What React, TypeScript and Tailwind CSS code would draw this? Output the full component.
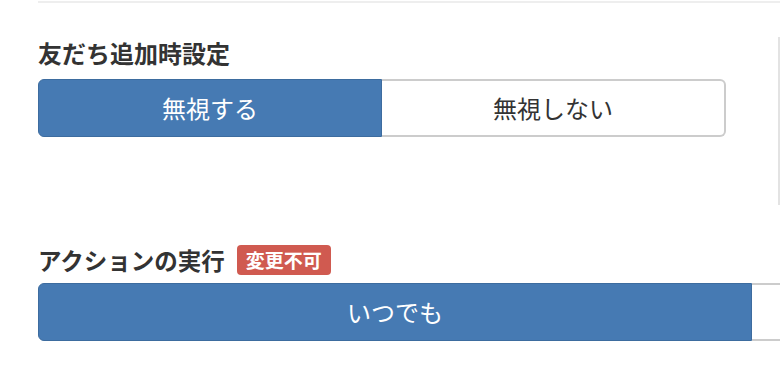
import React from 'react';

const FONT = { fontFamily: '"Noto Sans CJK JP", "Noto Sans", sans-serif' };

export default function App() {
  return (
    <div className="w-[780px] h-[376px] overflow-hidden bg-white text-[#333]" style={FONT}>
      {/* top divider */}
      <div className="ml-[38px] mt-[1px] h-[2px] bg-[#eeeeee]" />

      {/* 友だち追加時設定 */}
      <div className="flex mt-[34px] h-[168px]">
        <div className="w-[740px] pl-[38px]">
          <h2 className="text-[24px] leading-[32px] font-bold">友だち追加時設定</h2>
          <div className="mt-[10px] flex w-[688px] h-[58px]">
            <button className="flex-1 rounded-l-[6px] bg-[#467ab3] border border-[#3d6c9f] text-white text-[24px]">
              無視する
            </button>
            <button className="flex-1 rounded-r-[6px] bg-white border-2 border-l-0 border-[#cccccc] text-[#333] text-[24px]">
              無視しない
            </button>
          </div>
        </div>
        <div className="ml-[38px] w-[2px] bg-[#e3e3e3]" />
      </div>

      {/* アクションの実行 */}
      <div className="pl-[38px] mt-[39px]">
        <div className="flex items-center">
          <h2 className="text-[23.5px] leading-[32px] font-bold">アクションの実行</h2>
          <span className="ml-[12px] px-[9px] h-[30px] flex items-center rounded-[4px] bg-[#d05a50] text-white text-[19px] font-bold">
            変更不可
          </span>
        </div>
        <div className="mt-[7px] flex w-[800px] h-[58px]">
          <button className="w-[714px] rounded-l-[6px] bg-[#467ab3] border border-[#3d6c9f] text-white text-[24px]">
            いつでも
          </button>
          <button className="flex-1 bg-white border-2 border-l-0 border-[#cccccc] text-[#333] text-[24px]" />
        </div>
      </div>
    </div>
  );
}
